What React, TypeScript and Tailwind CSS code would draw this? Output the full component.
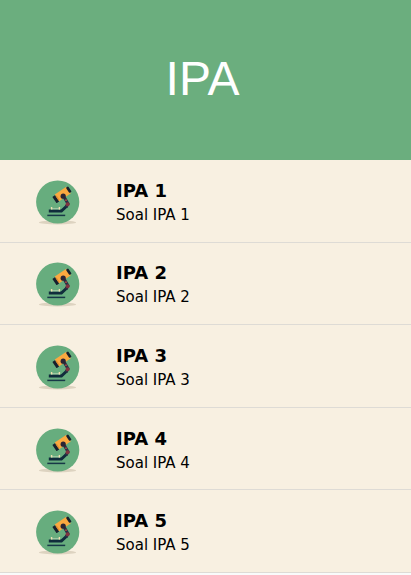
const quizzes = [
  { id: 1, title: "IPA 1", text: "Soal IPA 1" },
  { id: 2, title: "IPA 2", text: "Soal IPA 2" },
  { id: 3, title: "IPA 3", text: "Soal IPA 3" },
  { id: 4, title: "IPA 4", text: "Soal IPA 4" },
  { id: 5, title: "IPA 5", text: "Soal IPA 5" },
];

function Microscope() {
  return (
    <svg className="h-12 w-12 shrink-0" viewBox="0 0 48 48" aria-hidden="true">
      <ellipse cx="23.5" cy="43.4" rx="18.5" ry="2" fill="#ddd3c0" />
      <circle cx="23.7" cy="23" r="21.6" fill="#67ad7e" />
      {/* base and stage */}
      <path d="M13.3 36.4h17.9" stroke="#173747" strokeWidth="1.5" />
      <path d="M14.8 32h12.6l5.4-5" fill="none" stroke="#102c3c" strokeWidth="3" />
      <path d="M17.5 29.8h8.5" stroke="#a9cfa9" strokeWidth="1.2" />
      <path d="M17.6 28v2.4M25.4 28v2.4" stroke="#f0dfb0" strokeWidth="1.4" />
      {/* arm */}
      <path d="M29.8 17.4l4.2 7.4-2 3.4" fill="none" stroke="#2b2f45" strokeWidth="3" />
      <circle cx="33.6" cy="25.2" r="2" fill="#7f3440" />
      <circle cx="32" cy="21.2" r="0.9" fill="#b34a44" />
      {/* tube */}
      <g transform="rotate(-34 28.5 15.4)">
        <rect x="22" y="11.2" width="14" height="8" fill="#fba940" />
        <rect x="35" y="11.8" width="2.7" height="6.4" rx="0.8" fill="#17202e" />
        <rect x="18.6" y="11.8" width="3.2" height="7.6" rx="0.5" fill="#17202e" />
        <rect x="21.8" y="13" width="1.2" height="5.4" fill="#e08b31" />
      </g>
      <circle cx="29.2" cy="17.2" r="2.6" fill="#2a2435" />
    </svg>
  );
}

function App() {
  return (
    <div className="min-h-screen bg-[#f9fbfb] text-black">
      <header className="flex h-40 items-center justify-center bg-[#6bae7e] pr-1.5 pb-0.5">
        <h1
          className="text-5xl text-white"
          style={{ fontFamily: '"Liberation Sans", Arial, sans-serif' }}
        >
          IPA
        </h1>
      </header>
      <ul
        className="grid min-h-[413px] auto-rows-fr"
        style={{ fontFamily: 'Verdana, "DejaVu Sans", sans-serif' }}
      >
        {quizzes.map((quiz) => (
          <li
            key={quiz.id}
            className="flex items-center gap-[34px] border-b border-[#dedbd5] bg-[#f8f0e1] pt-1 pl-[34px]"
          >
            <Microscope />
            <div>
              <h2 className="text-lg leading-6 font-bold">{quiz.title}</h2>
              <p className="text-[15px] leading-6">{quiz.text}</p>
            </div>
          </li>
        ))}
      </ul>
    </div>
  );
}

export default App;
